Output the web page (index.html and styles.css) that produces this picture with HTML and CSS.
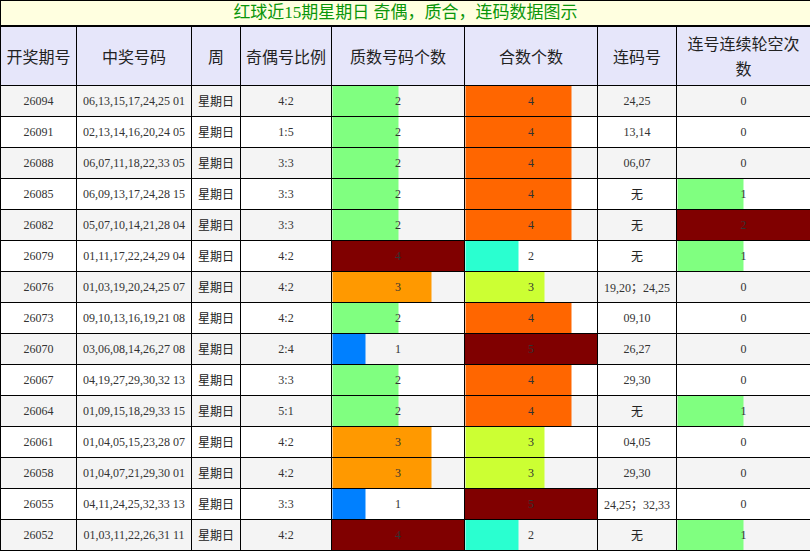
FILE: index.html
```html
<!DOCTYPE html>
<html lang="zh">
<head>
<meta charset="utf-8">
<title>红球近15期星期日 奇偶，质合，连码数据图示</title>
<link rel="stylesheet" href="styles.css">
</head>
<body>
<table class="chart">
  <colgroup>
    <col class="c1"><col class="c2"><col class="c3"><col class="c4"><col class="c5"><col class="c6"><col class="c7"><col class="c8">
  </colgroup>
  <thead>
    <tr class="title-row"><th colspan="8" class="title">红球近15期星期日 奇偶，质合，连码数据图示</th></tr>
    <tr class="head-row">
      <th>开奖期号</th><th>中奖号码</th><th>周</th><th>奇偶号比例</th><th>质数号码个数</th><th>合数个数</th><th>连码号</th><th>连号连续轮空次数</th>
    </tr>
  </thead>
  <tbody>
    <tr class="alt"><td>26094</td><td>06,13,15,17,24,25 01</td><td class="cjk">星期日</td><td>4:2</td><td class="bar b-green" style="--w:50%">2</td><td class="bar b-orange2" style="--w:80%">4</td><td>24,25</td><td class="bar" style="--w:0%">0</td></tr>
    <tr><td>26091</td><td>02,13,14,16,20,24 05</td><td class="cjk">星期日</td><td>1:5</td><td class="bar b-green" style="--w:50%">2</td><td class="bar b-orange2" style="--w:80%">4</td><td>13,14</td><td class="bar" style="--w:0%">0</td></tr>
    <tr class="alt"><td>26088</td><td>06,07,11,18,22,33 05</td><td class="cjk">星期日</td><td>3:3</td><td class="bar b-green" style="--w:50%">2</td><td class="bar b-orange2" style="--w:80%">4</td><td>06,07</td><td class="bar" style="--w:0%">0</td></tr>
    <tr><td>26085</td><td>06,09,13,17,24,28 15</td><td class="cjk">星期日</td><td>3:3</td><td class="bar b-green" style="--w:50%">2</td><td class="bar b-orange2" style="--w:80%">4</td><td class="cjk">无</td><td class="bar b-green" style="--w:50%">1</td></tr>
    <tr class="alt"><td>26082</td><td>05,07,10,14,21,28 04</td><td class="cjk">星期日</td><td>3:3</td><td class="bar b-green" style="--w:50%">2</td><td class="bar b-orange2" style="--w:80%">4</td><td class="cjk">无</td><td class="bar b-red" style="--w:100%">2</td></tr>
    <tr><td>26079</td><td>01,11,17,22,24,29 04</td><td class="cjk">星期日</td><td>4:2</td><td class="bar b-red" style="--w:100%">4</td><td class="bar b-cyan" style="--w:40%">2</td><td class="cjk">无</td><td class="bar b-green" style="--w:50%">1</td></tr>
    <tr class="alt"><td>26076</td><td>01,03,19,20,24,25 07</td><td class="cjk">星期日</td><td>4:2</td><td class="bar b-orange" style="--w:75%">3</td><td class="bar b-lime" style="--w:60%">3</td><td>19,20<span class="semi">；</span>24,25</td><td class="bar" style="--w:0%">0</td></tr>
    <tr><td>26073</td><td>09,10,13,16,19,21 08</td><td class="cjk">星期日</td><td>4:2</td><td class="bar b-green" style="--w:50%">2</td><td class="bar b-orange2" style="--w:80%">4</td><td>09,10</td><td class="bar" style="--w:0%">0</td></tr>
    <tr class="alt"><td>26070</td><td>03,06,08,14,26,27 08</td><td class="cjk">星期日</td><td>2:4</td><td class="bar b-blue" style="--w:25%">1</td><td class="bar b-red" style="--w:100%">5</td><td>26,27</td><td class="bar" style="--w:0%">0</td></tr>
    <tr><td>26067</td><td>04,19,27,29,30,32 13</td><td class="cjk">星期日</td><td>3:3</td><td class="bar b-green" style="--w:50%">2</td><td class="bar b-orange2" style="--w:80%">4</td><td>29,30</td><td class="bar" style="--w:0%">0</td></tr>
    <tr class="alt"><td>26064</td><td>01,09,15,18,29,33 15</td><td class="cjk">星期日</td><td>5:1</td><td class="bar b-green" style="--w:50%">2</td><td class="bar b-orange2" style="--w:80%">4</td><td class="cjk">无</td><td class="bar b-green" style="--w:50%">1</td></tr>
    <tr><td>26061</td><td>01,04,05,15,23,28 07</td><td class="cjk">星期日</td><td>4:2</td><td class="bar b-orange" style="--w:75%">3</td><td class="bar b-lime" style="--w:60%">3</td><td>04,05</td><td class="bar" style="--w:0%">0</td></tr>
    <tr class="alt"><td>26058</td><td>01,04,07,21,29,30 01</td><td class="cjk">星期日</td><td>4:2</td><td class="bar b-orange" style="--w:75%">3</td><td class="bar b-lime" style="--w:60%">3</td><td>29,30</td><td class="bar" style="--w:0%">0</td></tr>
    <tr><td>26055</td><td>04,11,24,25,32,33 13</td><td class="cjk">星期日</td><td>3:3</td><td class="bar b-blue" style="--w:25%">1</td><td class="bar b-red" style="--w:100%">5</td><td>24,25<span class="semi">；</span>32,33</td><td class="bar" style="--w:0%">0</td></tr>
    <tr class="alt"><td>26052</td><td>01,03,11,22,26,31 11</td><td class="cjk">星期日</td><td>4:2</td><td class="bar b-red" style="--w:100%">4</td><td class="bar b-cyan" style="--w:40%">2</td><td class="cjk">无</td><td class="bar b-green" style="--w:50%">1</td></tr>
  </tbody>
</table>
</body>
</html>
```
FILE: styles.css
```css
html, body {
  margin: 0;
  padding: 0;
  background: #ffffff;
}
.chart {
  border-collapse: collapse;
  table-layout: fixed;
  width: 810px;
  font-family: "Liberation Serif", "Noto Sans CJK SC", serif;
  color: #333;
}
.c1 { width: 76px; }
.c2 { width: 115px; }
.c3 { width: 49px; }
.c4 { width: 91px; }
.c5 { width: 133px; }
.c6 { width: 133px; }
.c7 { width: 79px; }
.c8 { width: 134px; }

.chart th, .chart td {
  border: 1px solid #000;
  padding: 0;
  text-align: center;
  vertical-align: middle;
}
.title-row th {
  height: 24px;
  border-bottom: 2px solid #000;
  background: #ffffe0;
  color: #0a960a;
  font-size: 17px;
  font-weight: normal;
  line-height: 24px;
}
.head-row th {
  height: 58px;
  background: #e6e6fa;
  color: #222;
  font-family: "Noto Sans CJK SC", sans-serif;
  font-size: 16px;
  font-weight: normal;
  line-height: 25px;
  padding: 0 4px;
}
.chart td {
  height: 30px;
  font-size: 12px;
  line-height: 14px;
}
.chart td.cjk {
  font-family: "Noto Sans CJK SC", sans-serif;
  font-size: 12px;
  color: #222;
}
.semi {
  font-family: "Noto Sans CJK SC", sans-serif;
}
tr.alt td { background-color: #f4f4f4; }
tr td { background-color: #ffffff; }

.chart td.bar {
  --c: transparent;
  background-image: linear-gradient(to right, var(--c) 0, var(--c) var(--w), transparent var(--w));
}
.b-green { --c: #80ff80 !important; }
.b-orange2 { --c: #ff6600 !important; }
.b-orange { --c: #ff9900 !important; }
.b-red { --c: #800000 !important; }
.b-cyan { --c: #2affd0 !important; }
.b-lime { --c: #ccff33 !important; }
.b-blue { --c: #0080ff !important; }
```
